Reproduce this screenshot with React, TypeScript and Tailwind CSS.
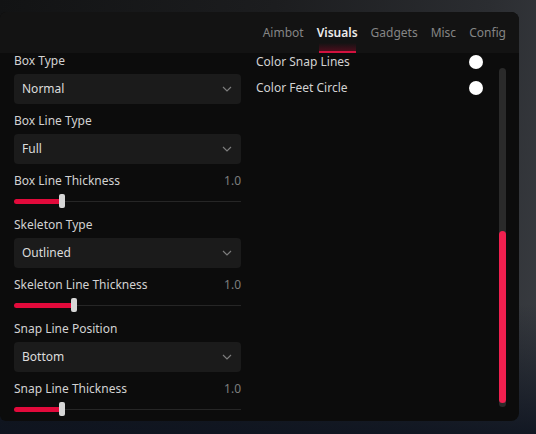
import React from 'react';

// ─── Data ────────────────────────────────────────────────────────────────────

const TABS = ['Aimbot', 'Visuals', 'Gadgets', 'Misc', 'Config'];

type Setting =
  | { kind: 'select'; label: string; value: string }
  | { kind: 'slider'; label: string; value: number; pct: number };

const LEFT: Setting[] = [
  { kind: 'select', label: 'Box Type', value: 'Normal' },
  { kind: 'select', label: 'Box Line Type', value: 'Full' },
  { kind: 'slider', label: 'Box Line Thickness', value: 1.0, pct: 21 },
  { kind: 'select', label: 'Skeleton Type', value: 'Outlined' },
  { kind: 'slider', label: 'Skeleton Line Thickness', value: 1.0, pct: 26.5 },
  { kind: 'select', label: 'Snap Line Position', value: 'Bottom' },
  { kind: 'slider', label: 'Snap Line Thickness', value: 1.0, pct: 21 },
];

const COLORS = ['Color Snap Lines', 'Color Feet Circle'];

// ─── Pieces ──────────────────────────────────────────────────────────────────

function Chevron() {
  return (
    <svg width="10" height="6" viewBox="0 0 10 6" fill="none">
      <polyline points="1,1 5,5 9,1" stroke="#7c7c7c" strokeWidth="1.2" />
    </svg>
  );
}

function Select({ label, value }: { label: string; value: string }) {
  return (
    <div className="flex flex-col">
      <div className="h-[16px] leading-[16px] text-[#d2d2d2]">{label}</div>
      <div className="mt-[5px] h-[30px] rounded-[4px] bg-[#1b1b1b] flex items-center justify-between pl-[8px] pr-[9px]">
        <span className="text-[#dcdcdc]">{value}</span>
        <Chevron />
      </div>
    </div>
  );
}

function Slider({ label, value, pct }: { label: string; value: number; pct: number }) {
  return (
    <div className="flex flex-col">
      <div className="h-[16px] leading-[16px] flex justify-between">
        <span className="text-[#d2d2d2]">{label}</span>
        <span className="text-[#7e7e7e]">{value.toFixed(1)}</span>
      </div>
      <div className="mt-[5px] h-[14px] relative flex items-center">
        <div className="w-full h-[1px] bg-[#262626]" />
        <div
          className="absolute left-0 h-[5px] rounded-full bg-[#e20a3b]"
          style={{ width: `${pct}%` }}
        />
        <div
          className="absolute top-0 h-[14px] w-[6px] -ml-[3px] rounded-[2px] bg-[#d6d6d6]"
          style={{ left: `${pct}%` }}
        />
      </div>
    </div>
  );
}

// ─── Main ────────────────────────────────────────────────────────────────────

export default function App() {
  return (
    <div
      className="w-[536px] h-[434px] overflow-hidden pt-[12px] bg-[linear-gradient(to_bottom,rgba(14,20,32,0)_70%,rgba(14,20,32,0.9)_100%),linear-gradient(100deg,#121314_0%,#1c1d1f_45%,#2b2d31_80%,#3a3d42_100%)] text-[12px]"
      style={{ fontFamily: '"Noto Sans", "Liberation Sans", sans-serif' }}
    >
      <div className="w-[519px] h-[409px] rounded-r-[8px] rounded-l-[6px] bg-[#0c0c0c] overflow-hidden flex flex-col">
        {/* Tab bar */}
        <div className="h-[41px] shrink-0 bg-[#131313] flex justify-end items-stretch gap-[13px] pr-[13px]">
          {TABS.map((t) => {
            const active = t === 'Visuals';
            return (
              <div key={t} className="relative flex items-center pt-[1px] text-[12px]">
                {active && (
                  <div className="absolute bottom-0 left-[2px] right-[2px] h-[10px] bg-[linear-gradient(to_bottom,rgba(120,10,30,0)_0%,rgba(120,10,35,0.55)_100%)] border-b-[2px] border-[#d3123f]" />
                )}
                <span className={active ? 'relative text-[#ececec] font-semibold' : 'text-[#858585]'}>{t}</span>
              </div>
            );
          })}
        </div>

        {/* Body */}
        <div className="flex-1 flex">
          <div className="w-[227px] ml-[14px] flex flex-col gap-[9px]">
            {LEFT.map((s) =>
              s.kind === 'select' ? (
                <Select key={s.label} label={s.label} value={s.value} />
              ) : (
                <Slider key={s.label} label={s.label} value={s.value} pct={s.pct} />
              )
            )}
          </div>

          <div className="w-[227px] ml-[15px] flex flex-col gap-[8px]">
            {COLORS.map((c) => (
              <div key={c} className="h-[18px] flex items-center justify-between">
                <span className="text-[#d2d2d2]">{c}</span>
                <span className="w-[14px] h-[14px] rounded-full bg-white" />
              </div>
            ))}
          </div>

          {/* Scrollbar */}
          <div className="ml-[16px] mt-[15px] w-[7px] h-[339px] rounded-full bg-[#2a2a2a] flex flex-col justify-end pb-[4px]">
            <div className="h-[172px] rounded-full bg-[#f1204f]" />
          </div>
        </div>
      </div>
    </div>
  );
}
